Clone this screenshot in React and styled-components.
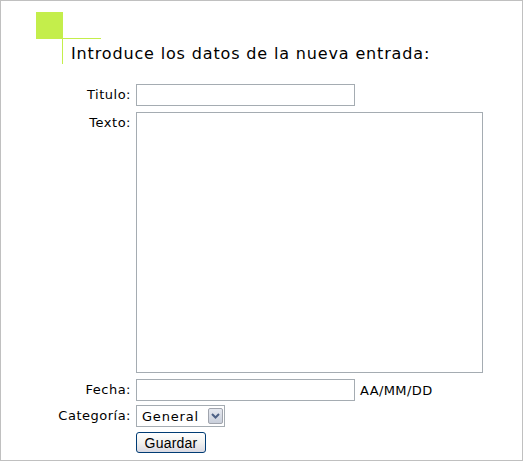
import styled, { createGlobalStyle } from 'styled-components'

const GlobalStyle = createGlobalStyle`
  html, body { margin: 0; padding: 0; background: #fff; }
  body { font-family: "DejaVu Sans", Verdana, sans-serif; color: #000; }
`

const Frame = styled.div`
  box-sizing: border-box;
  width: 523px;
  height: 461px;
  border: 1px solid #c0c0c0;
  padding: 11px 0 0 35px;
`

/* heading with the green corner mark */
const Heading = styled.h2`
  position: relative;
  margin: 0;
  padding: 32px 0 0 35px;
  height: 52px;
  box-sizing: border-box;
  font-size: 16px;
  font-weight: 400;
  line-height: 20px;
  letter-spacing: 0.85px;

  &::before {
    content: '';
    position: absolute;
    left: 0;
    top: 0;
    width: 27px;
    height: 27px;
    background: #c4ee4b;
  }

  &::after {
    content: '';
    position: absolute;
    left: 26px;
    top: 26px;
    width: 38px;
    height: 25px;
    border-top: 1px solid #c4ee4b;
    border-left: 1px solid #c4ee4b;
  }
`

const Form = styled.form`
  display: flex;
  flex-direction: column;
  margin-top: 20px;
  font-size: 13px;
  letter-spacing: 0.5px;
`

const Row = styled.div`
  display: grid;
  grid-template-columns: 95px auto;
  column-gap: 5px;
  align-items: ${({ $top }) => ($top ? 'start' : 'center')};
  margin-top: ${({ $gap }) => $gap}px;
`

const Label = styled.label`
  justify-self: end;
  padding-top: ${({ $top }) => ($top ? '3px' : '0')};
  line-height: 16px;
  white-space: nowrap;
`

const Field = styled.div`
  grid-column: 2;
  display: flex;
  align-items: center;
  gap: 5px;
`

const TextInput = styled.input`
  box-sizing: border-box;
  width: 219px;
  height: 22px;
  margin: 0;
  border: 1px solid #a5acb2;
  padding: 1px 3px;
  font: inherit;
  background: #fff;
`

const TextArea = styled.textarea`
  box-sizing: border-box;
  width: 347px;
  height: 261px;
  margin: 0;
  border: 1px solid #a5acb2;
  padding: 2px;
  font: inherit;
  resize: none;
  display: block;
`

const Hint = styled.span`
  font-size: 13px;
  letter-spacing: 0.4px;
  padding-top: 1px;
`

const SelectWrap = styled.div`
  position: relative;
  width: 89px;
  height: 22px;
`

const Select = styled.select`
  box-sizing: border-box;
  appearance: none;
  width: 100%;
  height: 100%;
  margin: 0;
  border: 1px solid #a5acb2;
  border-radius: 0;
  padding: 0 0 0 5px;
  background: #fff;
  font-family: "DejaVu Sans", Verdana, sans-serif;
  font-size: 13px;
  letter-spacing: 0.8px;
  color: #000;
`

const ArrowBox = styled.span`
  position: absolute;
  right: 2px;
  top: 3px;
  width: 15px;
  height: 16px;
  box-sizing: border-box;
  border: 1px solid #a0a4ad;
  border-radius: 2px;
  background: linear-gradient(#e6e9f0, #c9cfdb);
  display: flex;
  align-items: center;
  justify-content: center;
  pointer-events: none;
`

const Button = styled.button`
  width: 70px;
  height: 21px;
  margin: 0;
  padding: 0;
  border: 1px solid #003c74;
  border-radius: 3px;
  background: linear-gradient(#ffffff 0%, #f2f2f0 50%, #d9d9e2 100%);
  font-family: "Liberation Sans", Arial, sans-serif;
  font-size: 14px;
  letter-spacing: 0.2px;
  color: #000;
`

export default function App() {
  return (
    <>
      <GlobalStyle />
      <Frame>
        <Heading>Introduce los datos de la nueva entrada:</Heading>
        <Form onSubmit={(e) => e.preventDefault()}>
          <Row $gap={0}>
            <Label htmlFor="titulo">Titulo:</Label>
            <Field>
              <TextInput id="titulo" type="text" />
            </Field>
          </Row>

          <Row $gap={6} $top>
            <Label htmlFor="texto" $top>Texto:</Label>
            <Field>
              <TextArea id="texto" />
            </Field>
          </Row>

          <Row $gap={6}>
            <Label htmlFor="fecha">Fecha:</Label>
            <Field>
              <TextInput id="fecha" type="text" />
              <Hint>AA/MM/DD</Hint>
            </Field>
          </Row>

          <Row $gap={4}>
            <Label htmlFor="categoria">Categoría:</Label>
            <Field>
              <SelectWrap>
                <Select id="categoria" defaultValue="general">
                  <option value="general">General</option>
                </Select>
                <ArrowBox>
                  <svg width="9" height="6" viewBox="0 0 9 6">
                    <path d="M1 1 L4.5 4.5 L8 1" fill="none" stroke="#4d6185" strokeWidth="2" />
                  </svg>
                </ArrowBox>
              </SelectWrap>
            </Field>
          </Row>

          <Row $gap={5}>
            <Field>
              <Button type="submit">Guardar</Button>
            </Field>
          </Row>
        </Form>
      </Frame>
    </>
  )
}
